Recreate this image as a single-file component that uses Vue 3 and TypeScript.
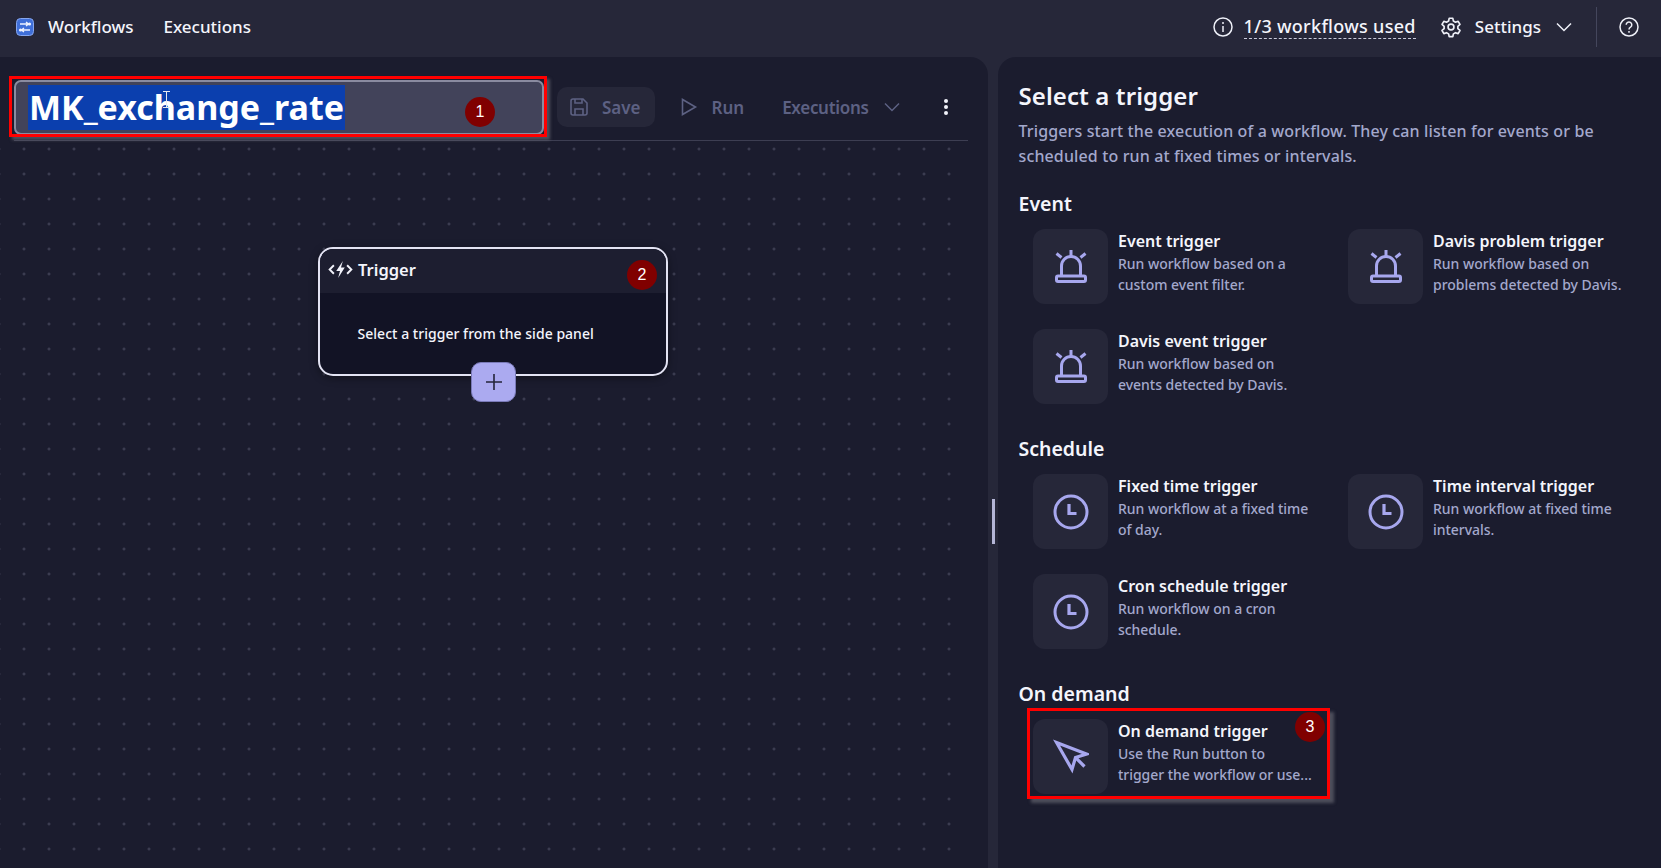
<template>
  <div class="app">
    <header class="topbar">
      <div class="brand">
        <svg class="logo" viewBox="0 0 18 18">
          <rect x="0.500" y="0.500" width="17" height="17" rx="4" fill="#3f6fd8" stroke="#86a6ee" />
          <path d="M4 6h8M14 12H6M10 4l2.500 2-2.500 2M8 10l-2.500 2L8 14" stroke="#f0f4ff" stroke-width="1.300" fill="none" />
          <circle cx="13.500" cy="6" r="1.600" fill="#f0f4ff" />
          <circle cx="4.500" cy="12" r="1.600" fill="#f0f4ff" />
        </svg>
        <span class="nav-item">Workflows</span>
        <span class="nav-item nav-gap">Executions</span>
      </div>
      <div class="top-right">
        <svg class="top-icon" viewBox="0 0 20 20" fill="none" stroke="#eef0f8" stroke-width="1.500">
          <circle cx="10" cy="10" r="9" />
          <path d="M10 9v6M10 5v2" />
        </svg>
        <span class="usage">1/3 workflows used</span>
        <svg class="top-icon gear" viewBox="0 0 24 24" fill="none" stroke="#eef0f8" stroke-width="1.800">
          <circle cx="12" cy="12" r="3.200" />
          <path d="M10 2.500h4l.6 3 2.300 1.300 2.900-1 2 3.400-2.300 2v2.600l2.300 2-2 3.400-2.900-1-2.300 1.300-.6 3h-4l-.6-3-2.300-1.300-2.900 1-2-3.400 2.300-2v-2.600l-2.300-2 2-3.400 2.900 1 2.300-1.300z" stroke-linejoin="round" />
        </svg>
        <span class="nav-item settings">Settings</span>
        <svg class="chev" viewBox="0 0 16 10" fill="none" stroke="#eef0f8" stroke-width="1.500"><path d="M1 1.500l7 7 7-7" /></svg>
        <span class="divider"></span>
        <svg class="top-icon help" viewBox="0 0 20 20" fill="none" stroke="#eef0f8" stroke-width="1.500">
          <circle cx="10" cy="10" r="9" />
          <path d="M7.200 7.800a2.800 2.800 0 1 1 4.300 2.400c-1 .6-1.500 1.200-1.500 2.300M10 14v1.800" />
        </svg>
      </div>
    </header>

    <main class="workspace">
      <section class="editor">
        <div class="toolbar">
          <div class="title-input">
            <span class="title-text">MK_exchange_rate</span>
            <svg class="ibeam" viewBox="0 0 7 17" fill="none" stroke="#e8e8f0" stroke-width="1"><path d="M0 .5h7M0 16.500h7M3.500 .5v16" /></svg>
            <span class="badge badge-one">1</span>
          </div>
          <div class="tool tool-save">
            <svg class="tool-icon" viewBox="0 0 18 18" fill="none" stroke="#5d6183" stroke-width="1.600">
              <path d="M1 3a2 2 0 0 1 2-2h10l4 4v10a2 2 0 0 1-2 2H3a2 2 0 0 1-2-2z" />
              <path d="M5 1v4h7V1M5 17v-6h8v6" />
            </svg>
            <span>Save</span>
          </div>
          <div class="tool tool-run">
            <svg class="tool-icon" viewBox="0 0 18 18" fill="none" stroke="#5d6183" stroke-width="1.600"><path d="M2.500 1.500v15l13-7.500z" /></svg>
            <span>Run</span>
          </div>
          <div class="tool tool-exec">
            <span>Executions</span>
            <svg class="chev" viewBox="0 0 16 10" fill="none" stroke="#5d6183" stroke-width="1.500"><path d="M1 1.500l7 7 7-7" /></svg>
          </div>
          <div class="kebab"><i></i><i></i><i></i></div>
        </div>

        <div class="canvas">
          <div class="node">
            <div class="node-head">
              <svg class="node-icon" viewBox="0 0 26 18" fill="#f2f3fb">
                <path d="M15.500 0L8.500 10.500h4L10.500 18l7-11h-4z" />
                <path d="M6 4.500L1.500 9 6 13.500M20 4.500L24.500 9 20 13.500" fill="none" stroke="#f2f3fb" stroke-width="2" />
              </svg>
              <span>Trigger</span>
              <span class="badge badge-two">2</span>
            </div>
            <div class="node-body">Select a trigger from the side panel</div>
            <div class="plus">
              <svg viewBox="0 0 18 18" width="18" height="18" stroke="#24253a" stroke-width="1.600"><path d="M9 1v16M1 9h16" /></svg>
            </div>
          </div>
        </div>
      </section>

      <div class="gutter"><span class="handle"></span></div>

      <aside class="panel">
        <h2 class="panel-title">Select a trigger</h2>
        <p class="panel-desc">Triggers start the execution of a workflow. They can listen for events or be scheduled to run at fixed times or intervals.</p>

        <div v-for="group in groups" :key="group.name" class="group">
          <h3 class="group-name">{{ group.name }}</h3>
          <div class="cards">
            <div v-for="card in group.cards" :key="card.title" class="card" :class="{ marked: card.marked }">
              <div class="tile">
                <svg v-if="group.icon === 'alarm'" viewBox="0 0 36 36" fill="none" stroke="#a7a7ee" stroke-width="3">
                  <rect x="3.500" y="27" width="29" height="5.500" rx="1.500" />
                  <path d="M8.500 27V17a9.500 9.500 0 0 1 19 0v10" />
                  <path d="M18 1v6M3.500 4.500l5 4M32.500 4.500l-5 4" />
                </svg>
                <svg v-else-if="group.icon === 'clock'" viewBox="0 0 36 36" fill="none" stroke="#a7a7ee" stroke-width="3">
                  <circle cx="18" cy="18" r="16" />
                  <path d="M16 10v9.500h7.500" stroke-width="3.200" />
                </svg>
                <svg v-else viewBox="0 0 36 36" fill="none" stroke="#a7a7ee" stroke-width="3.200">
                  <path d="M3.500 3.500l30 11.500-11 3.500-3.500 12z" />
                  <path d="M22.500 18.500l9 9" />
                </svg>
              </div>
              <div class="card-text">
                <div class="card-title">{{ card.title }}</div>
                <div class="card-desc">{{ card.desc }}</div>
              </div>
              <span v-if="card.marked" class="badge badge-three">3</span>
            </div>
          </div>
        </div>
      </aside>
    </main>
  </div>
</template>

<script setup lang="ts">
type Card = { title: string; desc: string; marked?: boolean }
type Group = { name: string; icon: 'alarm' | 'clock' | 'cursor'; cards: Card[] }

const groups: Group[] = [
  {
    name: 'Event',
    icon: 'alarm',
    cards: [
      { title: 'Event trigger', desc: 'Run workflow based on a custom event filter.' },
      { title: 'Davis problem trigger', desc: 'Run workflow based on problems detected by Davis.' },
      { title: 'Davis event trigger', desc: 'Run workflow based on events detected by Davis.' },
    ],
  },
  {
    name: 'Schedule',
    icon: 'clock',
    cards: [
      { title: 'Fixed time trigger', desc: 'Run workflow at a fixed time of day.' },
      { title: 'Time interval trigger', desc: 'Run workflow at fixed time intervals.' },
      { title: 'Cron schedule trigger', desc: 'Run workflow on a cron schedule.' },
    ],
  },
  {
    name: 'On demand',
    icon: 'cursor',
    cards: [{ title: 'On demand trigger', desc: 'Use the Run button to trigger the workflow or use...', marked: true }],
  },
]
</script>

<style>
html,
body {
  margin: 0;
  background: #262739;
  overflow: hidden;
}
</style>

<style scoped>
.app {
  width: 1661px;
  height: 868px;
  display: flex;
  flex-direction: column;
  background: #262739;
  color: #f4f5fc;
  font-family: "Noto Sans", sans-serif;
  font-weight: 500;
  overflow: hidden;
}

.topbar {
  height: 57px;
  flex: none;
  display: flex;
  align-items: center;
  justify-content: space-between;
  box-sizing: border-box;
  padding: 0 14px 4px 16px;
  font-size: 17px;
}
.brand,
.top-right {
  display: flex;
  align-items: center;
}
.logo {
  width: 18px;
  height: 18px;
  margin-right: 14px;
}
.nav-gap {
  margin-left: 30px;
}
.top-icon {
  width: 20px;
  height: 20px;
}
.usage {
  margin: 1px 0 0 11px;
  border-bottom: 1px dashed #c9cbdc;
  font-size: 18px;
  line-height: 23px;
  letter-spacing: 0.3px;
}
.gear {
  width: 22px;
  height: 22px;
  margin-left: 24px;
}
.settings {
  margin-left: 13px;
}
.chev {
  width: 16px;
  height: 10px;
  margin-left: 15px;
}
.divider {
  width: 1px;
  height: 40px;
  margin: 0 22px 0 24px;
  background: #44465c;
}
.help {
  margin-right: 8px;
}

.workspace {
  flex: 1;
  display: flex;
  min-height: 0;
}
.editor {
  width: 988px;
  flex: none;
  display: flex;
  flex-direction: column;
  background: #1b1c2e;
  border-top-right-radius: 18px;
}
.gutter {
  width: 10px;
  flex: none;
  display: flex;
  align-items: center;
  justify-content: center;
  padding-top: 118px;
  box-sizing: border-box;
}
.handle {
  width: 3px;
  height: 45px;
  background: #b4b5d6;
}
.panel {
  flex: 1;
  background: #1b1c2e;
  border-top-left-radius: 18px;
  padding: 23px 20px 0 20.500px;
  min-width: 0;
}

.toolbar {
  height: 84px;
  flex: none;
  margin: 0 20px 0 14px;
  display: flex;
  align-items: flex-end;
  border-bottom: 1px solid #3d3e52;
  color: #5d6183;
  font-size: 17px;
  font-weight: 600;
  box-sizing: border-box;
}
.title-input {
  position: relative;
  width: 530px;
  height: 55px;
  flex: none;
  box-sizing: border-box;
  margin-bottom: 5px;
  border: 2px solid #8a8ba0;
  border-radius: 7px;
  background: #42435a;
  padding: 3px 12px 0;
  display: flex;
  align-items: flex-start;
}
.title-input::after {
  content: "";
  position: absolute;
  left: -7px;
  top: -6px;
  width: 538px;
  height: 61px;
  box-sizing: border-box;
  border: 3px solid #f00;
  box-shadow: 3px 3px 3px rgba(120, 120, 130, 0.55);
}
.title-text {
  background: #0b3fae;
  color: #fff;
  font-size: 34px;
  font-weight: 700;
  line-height: 45px;
  height: 45px;
  padding: 0 1px;
}
.ibeam {
  position: absolute;
  left: 147px;
  top: 9px;
  width: 7px;
  height: 17px;
}
.tool {
  display: flex;
  align-items: center;
  gap: 14px;
  height: 40px;
  margin-bottom: 13px;
}
.tool-icon {
  width: 18px;
  height: 18px;
}
.tool-save {
  margin-left: 13px;
  padding: 0 14px 0 13px;
  background: #262739;
  border-radius: 10px;
}
.tool-run {
  margin-left: 25px;
}
.tool-exec {
  margin-left: 38px;
  gap: 0;
  letter-spacing: -0.3px;
}
.kebab {
  margin: 0 0 25px 44px;
  display: flex;
  flex-direction: column;
  gap: 2px;
}
.kebab i {
  width: 4px;
  height: 4px;
  border-radius: 50%;
  background: #f1f2fa;
}

.canvas {
  flex: 1;
  position: relative;
  margin-right: 20px;
  background-image: radial-gradient(circle, #46475c 1px, transparent 1.300px);
  background-size: 25px 25px;
  background-position: 11.500px 20.500px;
}
.node {
  position: absolute;
  left: 318px;
  top: 106px;
  width: 350px;
  height: 129px;
  box-sizing: border-box;
  border: 2px solid #e3e3f3;
  border-radius: 15px;
  background: #121325;
  box-shadow: 0 2px 8px rgba(0, 0, 0, 0.4);
}
.node-head {
  height: 44px;
  display: flex;
  align-items: center;
  gap: 5px;
  box-sizing: border-box;
  padding: 0 0 3px 8px;
  border-radius: 13px 13px 0 0;
  background: #1d1e30;
  font-size: 16.500px;
  font-weight: 600;
  position: relative;
}
.node-icon {
  width: 25px;
  height: 17px;
}
.node-body {
  padding: 31px 0 0 37.500px;
  font-size: 14px;
  line-height: 20px;
  letter-spacing: 0.03px;
}
.plus {
  position: absolute;
  left: 151px;
  top: 113px;
  width: 45px;
  height: 40px;
  display: flex;
  align-items: center;
  justify-content: center;
  background: #abaaf0;
  border-radius: 10px;
  border: 1px solid #7a7ab8;
  box-sizing: border-box;
}

.badge {
  position: absolute;
  width: 30px;
  height: 30px;
  border-radius: 50%;
  background: #800000;
  color: #fff;
  font-family: "Liberation Sans", sans-serif;
  font-size: 16px;
  font-weight: 400;
  display: flex;
  align-items: center;
  justify-content: center;
  z-index: 1;
}
.badge-one {
  left: 449px;
  top: 15px;
}
.badge-two {
  right: 9px;
  top: 11px;
}
.badge-three {
  left: 262px;
  top: -7px;
}

.panel-title {
  margin: 0;
  font-size: 24px;
  line-height: 32px;
  font-weight: 600;
  letter-spacing: 0.1px;
}
.panel-desc {
  margin: 7px 0 21px;
  width: 610px;
  color: #a3a8cc;
  font-size: 16px;
  line-height: 25px;
  letter-spacing: 0.13px;
}
.group {
  margin-bottom: 31px;
}
.group-name {
  margin: 0;
  font-size: 19.500px;
  line-height: 27px;
  font-weight: 600;
}
.cards {
  display: grid;
  grid-template-columns: 315px 1fr;
  row-gap: 25px;
  padding: 12px 0 0 14.500px;
}
.card {
  position: relative;
  display: flex;
  gap: 10px;
  height: 75px;
}
.card.marked::after {
  content: "";
  position: absolute;
  left: -6px;
  top: -11px;
  width: 303px;
  height: 91px;
  box-sizing: border-box;
  border: 3px solid #f00;
  box-shadow: 4px 4px 3px rgba(120, 120, 130, 0.55);
}
.tile {
  width: 75px;
  height: 75px;
  flex: none;
  border-radius: 12px;
  background: #262739;
  display: flex;
  align-items: center;
  justify-content: center;
}
.tile svg {
  width: 36px;
  height: 36px;
}
.card-text {
  width: 195px;
}
.card-title {
  font-size: 16px;
  line-height: 24px;
  font-weight: 600;
  white-space: nowrap;
}
.card-desc {
  color: #a3a8cc;
  font-size: 14px;
  line-height: 21px;
  letter-spacing: -0.03px;
}
</style>
